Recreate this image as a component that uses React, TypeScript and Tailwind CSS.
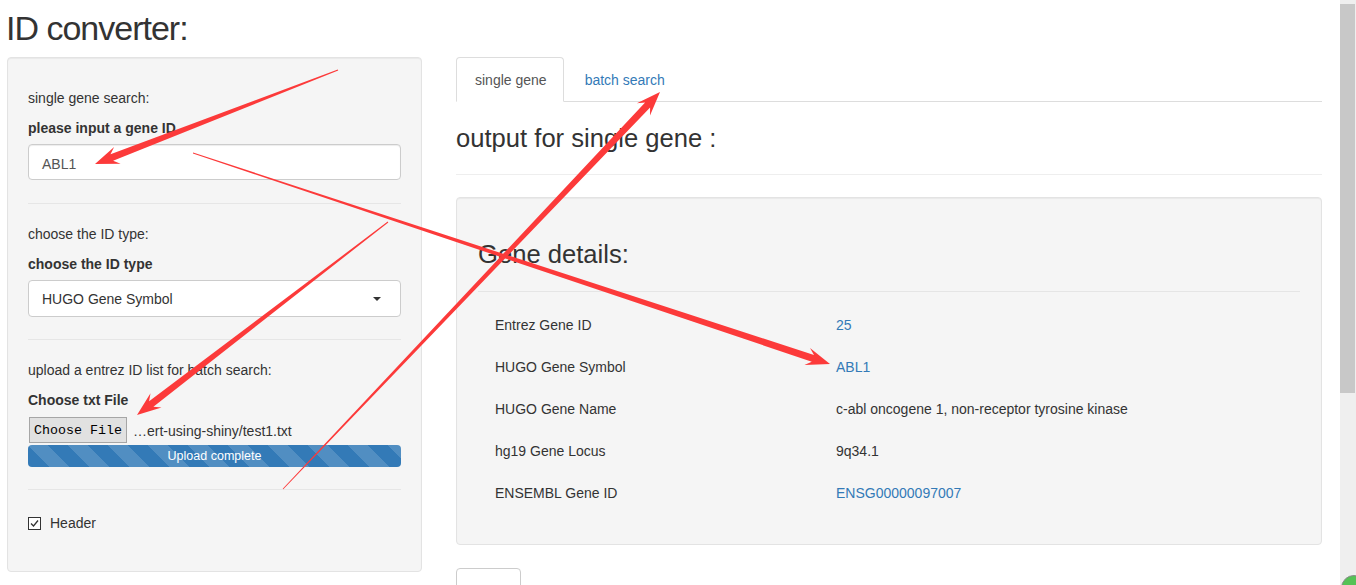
import React from "react";

type Pt = [number, number];

function arrowPoints(tail: Pt, tip: Pt, w0: number, w1: number, hl: number, hw: number) {
  const dx = tip[0] - tail[0];
  const dy = tip[1] - tail[1];
  const len = Math.hypot(dx, dy);
  const ux = dx / len;
  const uy = dy / len;
  const nx = -uy;
  const ny = ux;
  const bx = tip[0] - ux * hl;
  const by = tip[1] - uy * hl;
  const sb = 3;
  const pts: Pt[] = [
    [tail[0] + (nx * w0) / 2, tail[1] + (ny * w0) / 2],
    [bx + ux * 3 + (nx * w1) / 2, by + uy * 3 + (ny * w1) / 2],
    [bx - ux * sb + nx * hw, by - uy * sb + ny * hw],
    tip,
    [bx - ux * sb - nx * hw, by - uy * sb - ny * hw],
    [bx + ux * 3 - (nx * w1) / 2, by + uy * 3 - (ny * w1) / 2],
    [tail[0] - (nx * w0) / 2, tail[1] - (ny * w0) / 2],
  ];
  return pts.map((p) => `${p[0].toFixed(1)},${p[1].toFixed(1)}`).join(" ");
}

function Arrows() {
  const arrows: { tail: Pt; tip: Pt }[] = [
    { tail: [338, 70], tip: [95, 164] },
    { tail: [193, 153], tip: [830, 364] },
    { tail: [388, 222], tip: [137, 415] },
    { tail: [283, 489], tip: [660, 92] },
  ];
  return (
    <svg
      className="pointer-events-none absolute left-0 top-0"
      width={1356}
      height={585}
      viewBox="0 0 1356 585"
    >
      {arrows.map((a, i) => (
        <polygon key={i} points={arrowPoints(a.tail, a.tip, 0.9, 7, 21, 9)} fill="#fc3a3a" />
      ))}
    </svg>
  );
}

function Hr({ className }: { className: string }) {
  return <div className={className} />;
}

function LeftPanel() {
  return (
    <div className="h-[515px] w-[415px] rounded-[4px] border border-[#e3e3e3] bg-[#f5f5f5] px-[20px] pt-[30px] shadow-[inset_0_1px_1px_rgba(0,0,0,0.05)]">
      <p>single gene search:</p>
      <p className="mt-[10px] font-bold">please input a gene ID</p>
      <div className="mt-[6px] flex h-[36px] items-center rounded-[4px] border border-[#ccc] bg-white pl-[13px] pt-[3px] text-[#555] shadow-[inset_0_1px_1px_rgba(0,0,0,0.075)]">
        ABL1
      </div>
      <Hr className="mt-[23px] h-px bg-[#e6e6e6]" />
      <p className="mt-[20px]">choose the ID type:</p>
      <p className="mt-[10px] font-bold">choose the ID type</p>
      <div className="mt-[6px] flex h-[37px] items-center justify-between rounded-[4px] border border-[#ccc] bg-white pl-[13px] pr-[19px] pt-[1px] text-[#333]">
        <span>HUGO Gene Symbol</span>
        <svg width="8" height="4" viewBox="0 0 8 4">
          <polygon points="0,0 8,0 4,4" fill="#333" />
        </svg>
      </div>
      <Hr className="mt-[22px] h-px bg-[#e6e6e6]" />
      <p className="mt-[20px]">upload a entrez ID list for batch search:</p>
      <p className="mt-[10px] font-bold">Choose txt File</p>
      <div className="mt-[7px] flex h-[26px] items-center">
        <div className="ml-[1px] flex h-[26px] w-[98px] items-center justify-center border border-[#a6a6a6] bg-[#e1e1e1] pt-[1px] font-['Liberation_Mono',monospace] text-[13.33px] text-black">
          Choose File
        </div>
        <span className="ml-[6px] pt-[2px]">…ert-using-shiny/test1.txt</span>
      </div>
      <div className="mt-[2px] h-[22px] rounded-[4px] bg-[#337ab7] bg-[linear-gradient(45deg,rgba(255,255,255,0.15)_25%,transparent_25%,transparent_50%,rgba(255,255,255,0.15)_50%,rgba(255,255,255,0.15)_75%,transparent_75%,transparent)] bg-[length:40px_40px] text-center text-[12.5px] leading-[22px] text-white">
        Upload complete
      </div>
      <Hr className="mt-[22px] h-px bg-[#e6e6e6]" />
      <div className="mt-[23px] flex h-[20px] items-center">
        <span className="flex h-[13px] w-[13px] items-center justify-center border border-[#333] bg-white">
          <svg width="11" height="11" viewBox="0 0 11 11">
            <polyline points="2,5.5 4.5,8 9,2.5" fill="none" stroke="#333" strokeWidth="1.3" />
          </svg>
        </span>
        <span className="ml-[9px]">Header</span>
      </div>
    </div>
  );
}

const rows: { label: string; value: string; link: boolean }[] = [
  { label: "Entrez Gene ID", value: "25", link: true },
  { label: "HUGO Gene Symbol", value: "ABL1", link: true },
  { label: "HUGO Gene Name", value: "c-abl oncogene 1, non-receptor tyrosine kinase", link: false },
  { label: "hg19 Gene Locus", value: "9q34.1", link: false },
  { label: "ENSEMBL Gene ID", value: "ENSG00000097007", link: true },
];

function RightCol() {
  return (
    <div className="ml-[34px] w-[866px]">
      <div className="flex h-[45px] border-b border-[#ddd]">
        <div className="h-[45px] rounded-t-[4px] border border-[#ddd] border-b-transparent bg-white pl-[18px] pr-[16px] pt-[12px] text-[#555]">
          single gene
        </div>
        <div className="ml-[3px] pl-[18px] pr-[16px] pt-[13px] text-[#337ab7]">batch search</div>
      </div>
      <h3 className="mt-[23px] h-[26px] text-[25.6px] font-normal leading-[26px]">output for single gene :</h3>
      <Hr className="mt-[23px] h-px bg-[#eee]" />
      <div className="mt-[22px] h-[348px] rounded-[4px] border border-[#e3e3e3] bg-[#f5f5f5] px-[21px] shadow-[inset_0_1px_1px_rgba(0,0,0,0.05)]">
        <h4 className="mt-[43px] h-[26px] text-[25.6px] font-normal leading-[26px]">Gene details:</h4>
        <Hr className="mt-[24px] h-px bg-[#e5e5e5]" />
        <div className="mt-[11.5px] grid grid-cols-[358px_1fr]">
          {rows.map((r) => (
            <React.Fragment key={r.label}>
              <div className="flex h-[42px] items-center pl-[17px]">{r.label}</div>
              <div className={`flex h-[42px] items-center ${r.link ? "text-[#337ab7]" : "text-[#333]"}`}>
                {r.value}
              </div>
            </React.Fragment>
          ))}
        </div>
      </div>
      <div className="mt-[23px] h-[34px] w-[65px] rounded-[4px] border border-[#ccc] bg-white" />
    </div>
  );
}

function Scrollbar() {
  return (
    <div className="h-full w-[16px] bg-[#efefef]">
      <div className="mt-[4px] h-[389px] w-[15px] bg-[#c8c8c8]" />
    </div>
  );
}

export default function App() {
  return (
    <div className="relative flex h-[585px] w-[1356px] overflow-hidden bg-white font-['Liberation_Sans',Arial,sans-serif] text-[14px] leading-[20px] text-[#333]">
      <div className="flex-1 pl-[7px] pr-[18px]">
        <h1 className="mb-[9px] ml-[-1px] pt-[9px] text-[34px] font-normal leading-[39px] tracking-[-1px]">
          ID converter:
        </h1>
        <div className="flex">
          <LeftPanel />
          <RightCol />
        </div>
      </div>
      <Scrollbar />
      <div className="pointer-events-none absolute left-[1341px] top-[575px] h-[26px] w-[26px] rounded-full border border-[#8a8a8a] bg-[#55c255]" />
      <Arrows />
    </div>
  );
}
